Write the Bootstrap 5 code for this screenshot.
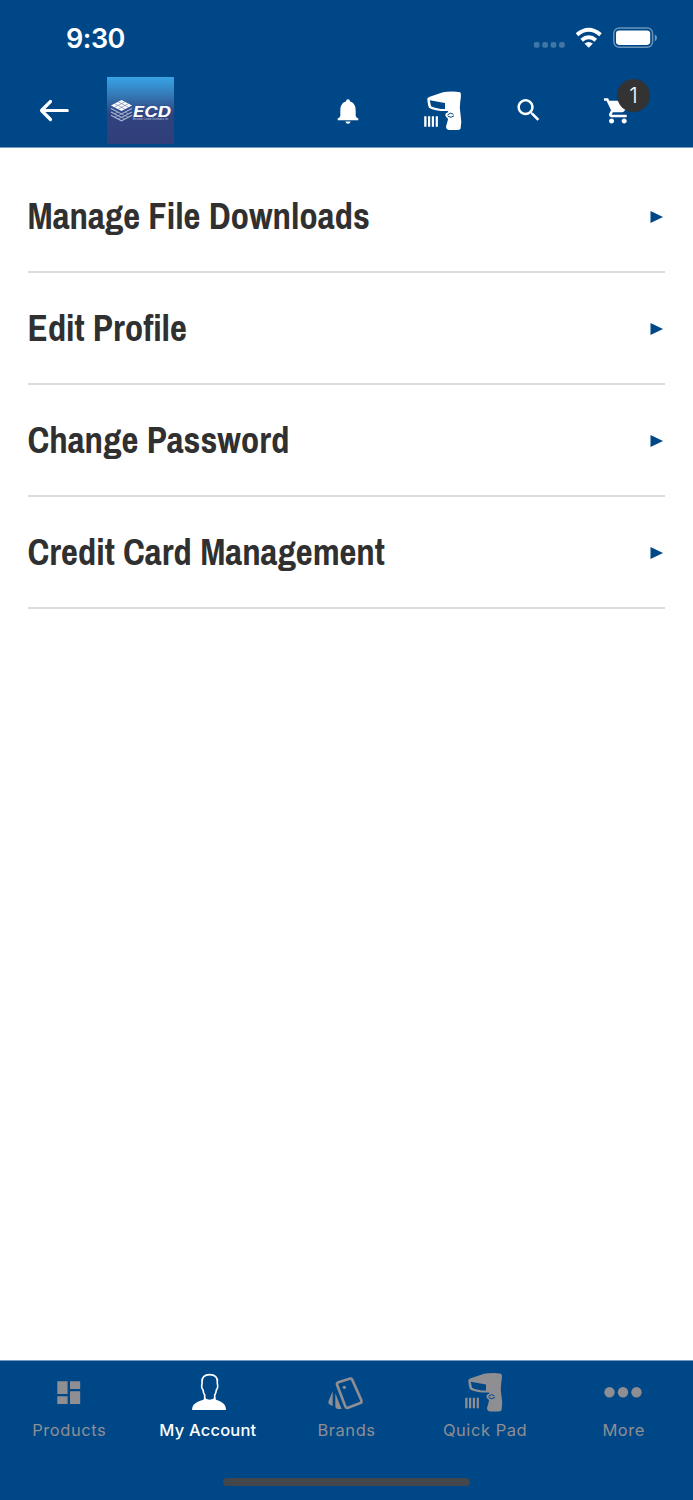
<!DOCTYPE html>
<html lang="en">
<head>
<meta charset="utf-8">
<meta name="viewport" content="width=device-width, initial-scale=1">
<title>My Account</title>
<link rel="stylesheet" href="https://cdn.jsdelivr.net/npm/bootstrap@5.3.0/dist/css/bootstrap.min.css">
<style>
  :root { --brand: #004788; --muted: #8e8e93; }
  body { font-family: Inter, "Liberation Sans", sans-serif; height: 1500px; color: #303030; }
  svg { display: block; flex: none; overflow: visible; }
  .brand-bg { background: var(--brand); }
  .top-area { height: 148px; border-bottom: 1px solid #7a9abb; }
  .status-row { height: 77px; padding: 0 36px 0 66px; }
  .clock { font-size: 27px; font-weight: 600; line-height: 78px; letter-spacing: -.5px; }
  .tool-row { height: 67px; padding-left: 39px; }
  .g-logo { margin-left: 38px; }
  .g-bell { margin-left: 163px; }
  .g-scan { margin-left: 65px; }
  .g-find { margin-left: 55px; }
  .g-cart { margin-left: 63px; }
  .count { position: absolute; left: 13px; top: -12px; width: 33px; height: 33px; background: #333; font-size: 21.500px; font-weight: 300; line-height: 33px; }
  .menu-list { padding: 13px 28px 0; }
  .menu-row { height: 112px; border-bottom: 2px solid #dcdcdc; color: #303030; text-decoration: none; }
  .menu-row svg { margin-top: 1px; }
  .menu-label { font-family: "Liberation Sans Narrow", "Archivo Narrow", "Liberation Sans", sans-serif; font-weight: 700; font-size: 37px; letter-spacing: -.08px; line-height: 1; white-space: nowrap; margin: 1px 0 0 -.5px; }
  .tab-area { height: 140px; border-top: 1px solid #7a9abb; }
  .tab-link { color: var(--muted); font-size: 16.500px; font-weight: 400; letter-spacing: .550px; line-height: 20px; padding-top: 11px; width: 20%; text-decoration: none; white-space: nowrap; }
  .tab-link.current { color: #fff; font-weight: 500; letter-spacing: .200px; }
  .tab-link svg { margin-bottom: 8px; }
  .home-bar { width: 247px; height: 8px; background: #43464b; margin-bottom: 14px; }
</style>
</head>
<body class="d-flex flex-column bg-white overflow-hidden">
<svg width="0" height="0" class="position-absolute">
  <defs>
    <symbol id="scanner" viewBox="0 0 38 40">
      <path fill="currentColor" fill-rule="evenodd" d="M3.300 7.600 5 6 19 1.200Q22 .4 29 .4 36 .6 36.600 1.700 37.400 4 36.200 11 35.200 17 36.600 24 38 31 36.600 37.500 36 39 33 39H25.500Q22 38.700 22 35.500L24 28.500Q24 26.800 22.200 26 20.400 24 22 22.200L24.500 21 23.700 20H17Q9 19.300 5 16.800 3.600 14 3.300 7.600ZM5.700 9.200 7.100 15.200Q13 18.100 21 18V12Z"/>
      <path fill="none" stroke="var(--brand)" stroke-width="1" d="M23.500 24Q26 20.800 29.500 23.200M23.800 25.200Q27 27.500 30 24.800"/>
      <path fill="currentColor" d="M.2 25.300h2.300v10.500h-2.300zM4 25.300h2.200v10.500H4zM7.800 25.300h2.200v10.500h-2.200zM11.700 25.300h2.200v10.500h-2.200z"/>
    </symbol>
  </defs>
</svg>

<header class="top-area brand-bg text-white flex-shrink-0">
  <div class="status-row d-flex justify-content-between">
    <span class="clock">9:30</span>
    <svg width="124" height="77" viewBox="533 0 124 77" fill="#fff">
      <g opacity=".25"><rect x="533.800" y="42" width="5.800" height="5.800" rx="2"/><rect x="542.200" y="42" width="5.800" height="5.800" rx="2"/><rect x="550.600" y="42" width="5.800" height="5.800" rx="2"/><rect x="559" y="42" width="5.800" height="5.800" rx="2"/></g>
      <g fill="none" stroke="#fff" stroke-width="4"><path d="M577 34.800Q588.700 24.800 600.500 34.800"/><path d="M581.700 40.200Q588.700 34.300 595.800 40.200"/></g>
      <path d="M588.700 47.800 584.500 43.600Q588.700 40.300 592.900 43.600Z"/>
      <rect x="613.800" y="28" width="38.800" height="19.300" rx="5.500" fill="none" stroke="#fff" stroke-opacity=".42" stroke-width="1.400"/>
      <rect x="616" y="30.500" width="34.200" height="14.400" rx="3.300"/>
      <path opacity=".45" d="M654.800 34.500Q657 35.500 657 37.800T654.800 41.200Z"/>
    </svg>
  </div>
  <div class="tool-row d-flex align-items-center">
    <svg width="30" height="40" viewBox="39 90.500 30 40" fill="none" stroke="#fff" stroke-width="3.200" stroke-linecap="round" stroke-linejoin="round"><path d="M67.300 110H41.500M50.500 101 41.500 110 50.500 119"/></svg>
    <svg class="g-logo" width="67" height="67" viewBox="107 77 67 67">
      <defs><linearGradient id="sky" x1="0" y1="0" x2="0" y2="1"><stop offset="0" stop-color="#38a4e6"/><stop offset=".28" stop-color="#3478b5"/><stop offset=".55" stop-color="#30437f"/><stop offset="1" stop-color="#303e79"/></linearGradient></defs>
      <rect x="107" y="77" width="67" height="67" fill="url(#sky)"/>
      <g fill="none" stroke="#a9b6d3" stroke-width="1.100"><path d="M111 108.500 121.500 114 132 108.500M111 112 121.500 117.500 132 112M111 115.300 121.500 120.800 132 115.300"/><path stroke-width=".7" d="M114.500 114 118 112M118 115.800 121.500 114 125 115.800M125 112 128.500 114M114.500 117.300 118 115.500M118 119 121.500 117.300 125 119M125 115.500 128.500 117.300"/></g>
      <path fill="#fff" d="M121.500 100 132 105.500 121.500 111 111 105.500Z"/>
      <path stroke="#7585ad" stroke-width=".7" fill="none" d="M118 101.800 128.500 107.300M114.500 103.600 125 109.200M125 101.800 114.500 107.300M128.500 103.600 118 109.200"/>
      <text x="133" y="116.500" textLength="38" lengthAdjust="spacingAndGlyphs" font-family="Inter, sans-serif" font-size="14" font-weight="700" font-style="italic" fill="#fff">ECD</text>
      <text x="132.800" y="120.400" textLength="36" lengthAdjust="spacingAndGlyphs" font-family="Liberation Sans, sans-serif" font-size="2.800" fill="#c4cce0">Electronic Custom Distributors, Inc.</text>
    </svg>
    <svg class="g-bell" width="22" height="40" viewBox="337 90.500 22 40" fill="#fff"><g transform="translate(320 70) scale(.33333)"><path d="M84 86q6 0 6 7c13 4 17 14 17 27v15q0 6 8 9v5H53v-5q8-3 8-9v-15c0-13 4-23 17-27q0-7 6-7zM76 153h16q-2 7-8 7t-8-7z"/></g></svg>
    <svg class="g-scan" width="38" height="40"><use href="#scanner"/></svg>
    <svg class="g-find" width="24" height="40" viewBox="517 90.500 24 40" fill="#fff"><path transform="translate(513.700 94.700) scale(1.250)" d="M15.500 14h-.79l-.28-.27C15.410 12.590 16 11.110 16 9.500 16 5.910 13.090 3 9.500 3S3 5.910 3 9.500 5.910 16 9.500 16c1.610 0 3.090-.59 4.230-1.570l.27.28v.79l5 4.990L20.490 19l-4.990-5zm-6 0C7.010 14 5 11.990 5 9.500S7.010 5 9.500 5 14 7.010 14 9.500 11.990 14 9.500 14z"/></svg>
    <div class="g-cart position-relative">
      <svg width="28" height="40" viewBox="604 90.500 28 40" fill="#fff"><path transform="translate(602.700 95.200) scale(1.265)" d="M7 18c-1.100 0-1.990.9-1.990 2S5.900 22 7 22s2-.9 2-2-.9-2-2-2zM1 2v2h2l3.600 7.590-1.350 2.450c-.16.28-.25.61-.25.96 0 1.100.9 2 2 2h12v-2H7.420c-.14 0-.25-.11-.25-.25l.03-.12.9-1.630h7.450c.75 0 1.410-.41 1.750-1.030l3.580-6.490A1.003 1.003 0 0 0 20 4H5.210l-.94-2H1zM17 18c-1.100 0-1.990.9-1.990 2s.89 2 1.990 2 2-.9 2-2-.9-2-2-2z"/></svg>
      <span class="count rounded-circle text-center">1</span>
    </div>
  </div>
</header>

<main class="menu-list flex-grow-1">
  <a class="menu-row d-flex align-items-center justify-content-between" href="#"><span class="menu-label">Manage File Downloads</span><svg width="15" height="14"><path fill="#004788" d="M.5 1v12L13 7z"/></svg></a>
  <a class="menu-row d-flex align-items-center justify-content-between" href="#"><span class="menu-label">Edit Profile</span><svg width="15" height="14"><path fill="#004788" d="M.5 1v12L13 7z"/></svg></a>
  <a class="menu-row d-flex align-items-center justify-content-between" href="#"><span class="menu-label">Change Password</span><svg width="15" height="14"><path fill="#004788" d="M.5 1v12L13 7z"/></svg></a>
  <a class="menu-row d-flex align-items-center justify-content-between" href="#"><span class="menu-label">Credit Card Management</span><svg width="15" height="14"><path fill="#004788" d="M.5 1v12L13 7z"/></svg></a>
</main>

<footer class="tab-area brand-bg d-flex flex-column justify-content-between align-items-center flex-shrink-0">
  <nav class="d-flex w-100">
    <a class="tab-link d-flex flex-column align-items-center" href="#">
      <svg width="24" height="40" viewBox="57 1372 24 40" fill="#8e8e93"><path d="M57.300 1381.200h10.300v12.800H57.300zM57.300 1396.300h10.300v7.700H57.300zM70 1381.200h10.200v7.700H70zM70 1391.300h10.200v12.700H70z"/></svg>Products</a>
    <a class="tab-link current d-flex flex-column align-items-center" href="#">
      <svg width="36" height="40" viewBox="190.300 1372 36 40"><g transform="translate(185 1365) scale(.33333)"><path fill="#fff" d="M58 97Q66 104 75 104T92 97V103C100 109 124 110 124 135H22C22 110 50 109 58 103Z"/><path fill="none" stroke="#fff" stroke-width="5" d="M60 106V90Q56 84 55 75 50 71 51 60 53 58 52 51C51 37 59 29 75 29S99 37 98 51Q97 58 99 60 100 71 95 75 94 84 90 90V106"/></g></svg>My Account</a>
    <a class="tab-link d-flex flex-column align-items-center" href="#">
      <svg width="36" height="40" viewBox="328 1372 36 40"><g transform="translate(300 1350) scale(.33333)" fill="#8e8e93"><path fill="none" stroke="#8e8e93" stroke-width="8" d="M115 97 149 86Q155 84 157 90L184 151Q186 157 181 159L144 173Q138 175 136 169L111 104Q110 99 115 97Z"/><circle cx="133" cy="112" r="5"/><path d="M98 124V168L90 164Q83 160 86 152ZM106 130 125 177H114Q106 176 106 168Z"/></g></svg>Brands</a>
    <a class="tab-link d-flex flex-column align-items-center" href="#">
      <svg width="38" height="40" viewBox="1 -.5 38 40"><use href="#scanner" width="38" height="40"/></svg>Quick Pad</a>
    <a class="tab-link d-flex flex-column align-items-center" href="#">
      <svg width="38" height="40" viewBox="1 0 38 40" fill="#8e8e93"><circle cx="5.500" cy="20.300" r="5.200"/><circle cx="19" cy="20.300" r="5.200"/><circle cx="32.500" cy="20.300" r="5.200"/></svg>More</a>
  </nav>
  <div class="home-bar rounded-pill"></div>
</footer>
<script src="https://cdn.jsdelivr.net/npm/bootstrap@5.3.0/dist/js/bootstrap.bundle.min.js"></script>
</body>
</html>
